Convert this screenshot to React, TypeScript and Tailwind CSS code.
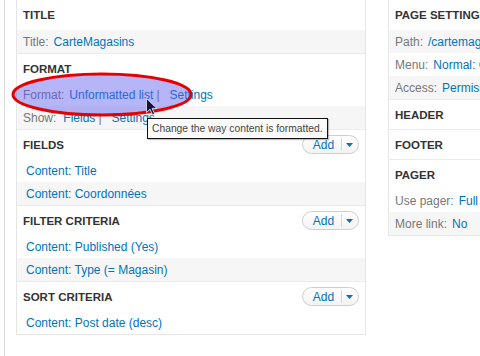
function AddButton() {
  return (
    <div className="flex h-[19px] w-[57px] items-center rounded-full border border-[#cfcfcf] bg-gradient-to-b from-white to-[#f3f3f3]">
      <span className="flex-1 pl-[3px] text-center text-[12px] text-[#0074bd]">Add</span>
      <span className="h-[13px] border-l border-[#d6d6d6]" />
      <span className="flex w-[16px] justify-center pr-[1px]">
        <svg width="7" height="4" viewBox="0 0 7 4">
          <path d="M0 0 L7 0 L3.5 4 Z" fill="#0074bd" />
        </svg>
      </span>
    </div>
  )
}

function Heading({ children, add }: { children: React.ReactNode; add?: boolean }) {
  return (
    <div className="flex h-[30px] items-center justify-between border-t border-[#ececec] pl-[6px] pr-[6px]">
      <span className="pt-[2px] text-[11.5px] font-bold text-[#333]">{children}</span>
      {add && <AddButton />}
    </div>
  )
}

function Row({ gray, indent, children }: { gray?: boolean; indent?: boolean; children: React.ReactNode }) {
  return (
    <div
      className={`flex h-[23px] items-center whitespace-nowrap text-[12px] text-[#777] ${gray ? 'bg-[#f6f6f6]' : ''} ${indent ? 'pl-[9px]' : 'pl-[6px]'}`}
    >
      {children}
    </div>
  )
}

function Link({ children }: { children: React.ReactNode }) {
  return <span className="text-[#0074bd]">{children}</span>
}

function Label({ children }: { children: React.ReactNode }) {
  return <span className="mr-[5px]">{children}</span>
}

export default function App() {
  return (
    <div className="relative flex h-[356px] w-[480px] overflow-hidden bg-white font-['Liberation_Sans',Arial,sans-serif]">
      <div className="ml-[4px] flex h-full border-l border-[#dcdcdc] pl-[11px]">

        {/* Main column */}
        <div className="h-[335px] w-[350px] border border-t-0 border-[#e6e6e6] bg-white">
          <div className="flex h-[30px] items-center pl-[6px]">
            <span className="pt-[2px] text-[11.5px] font-bold text-[#333]">TITLE</span>
          </div>
          <Row gray>
            <Label>Title:</Label>
            <Link>CarteMagasins</Link>
          </Row>
          <Heading>FORMAT</Heading>
          <Row>
            <Label>Format:</Label>
            <Link>Unformatted list</Link>
            <span className="ml-[3px] mr-[10px]">|</span>
            <Link>Settings</Link>
          </Row>
          <Row gray>
            <span className="mr-[7px]">Show:</span>
            <Link>Fields</Link>
            <span className="ml-[3px] mr-[10px]">|</span>
            <Link>Settings</Link>
          </Row>
          <Heading add>FIELDS</Heading>
          <Row indent><Link>Content: Title</Link></Row>
          <Row indent gray><Link>Content: Coordonnées</Link></Row>
          <Heading add>FILTER CRITERIA</Heading>
          <Row indent><Link>Content: Published (Yes)</Link></Row>
          <Row indent gray><Link>Content: Type (= Magasin)</Link></Row>
          <Heading add>SORT CRITERIA</Heading>
          <Row indent><Link>Content: Post date (desc)</Link></Row>
        </div>

        {/* Side column */}
        <div className="ml-[22px] h-[236px] w-[200px] shrink-0 border border-t-0 border-[#e6e6e6] bg-white">
          <div className="flex h-[30px] items-center pl-[6px]">
            <span className="pt-[2px] text-[11.5px] font-bold text-[#333]">PAGE SETTINGS</span>
          </div>
          <Row gray>
            <Label>Path:</Label>
            <Link>/cartemagasins</Link>
          </Row>
          <Row>
            <Label>Menu:</Label>
            <Link>Normal: Carte</Link>
          </Row>
          <Row gray>
            <Label>Access:</Label>
            <Link>Permission</Link>
          </Row>
          <Heading>HEADER</Heading>
          <Heading>FOOTER</Heading>
          <Heading>PAGER</Heading>
          <Row>
            <Label>Use pager:</Label>
            <Link>Full</Link>
          </Row>
          <Row gray>
            <Label>More link:</Label>
            <Link>No</Link>
          </Row>
        </div>
      </div>

      {/* Highlight ellipse */}
      <svg className="pointer-events-none absolute left-[10px] top-[71px]" width="184" height="48" viewBox="0 0 184 48">
        <ellipse cx="92" cy="23.5" rx="89" ry="20.5" fill="rgba(90,90,240,0.45)" stroke="#e60000" strokeWidth="3" />
      </svg>

      {/* Cursor */}
      <svg className="pointer-events-none absolute left-[146px] top-[98px]" width="12" height="18" viewBox="0 0 12 18">
        <path d="M0.5 0.5 L0.5 14.5 L4 11.2 L6.6 16.8 L8.6 15.9 L6.1 10.4 L10.8 10.4 Z" fill="#14143c" stroke="#e8e8ff" strokeWidth="0.8" />
      </svg>

      {/* Tooltip */}
      <div className="absolute left-[147px] top-[118px] flex h-[21px] items-center whitespace-nowrap border border-[#111] bg-[#fafafa] px-[4px] text-[10.3px] text-[#444] shadow-[1px_1px_1px_rgba(0,0,0,0.25)]">
        Change the way content is formatted.
      </div>
    </div>
  )
}
